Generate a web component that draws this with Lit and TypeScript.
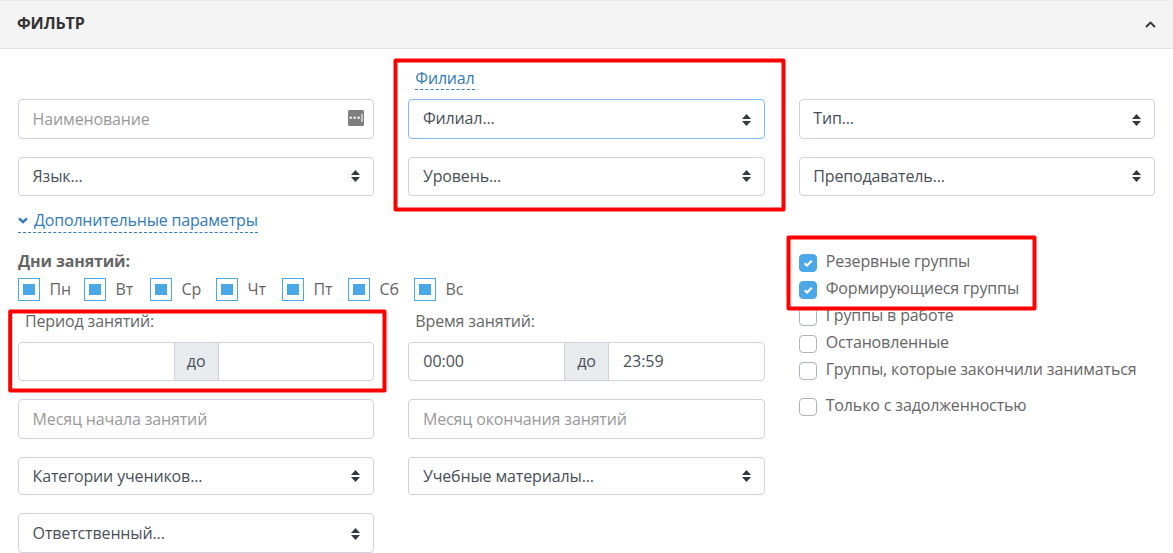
import { LitElement, html, svg, css, nothing } from "lit";
import { customElement, property } from "lit/decorators.js";

const FONT = css`"Open Sans", "Noto Sans", sans-serif`;

@customElement("filter-field")
class FilterField extends LitElement {
  @property() label = "";
  @property() kind = "select";
  static styles = css`
    :host { display: flex; box-sizing: border-box; align-items: center; justify-content: space-between;
      border: 1px solid #ced2da; border-radius: 4px; background: #fff;
      padding: 0 14px 0 13.6px; color: #495057; font: 16px/24px ${FONT}; white-space: nowrap; }
    :host([focused]) { border-color: #7fb9fb; }
    :host([raised]) .value { margin-top: -2px; }
    .hint { color: #999; }
    .sort { display: block; width: 9px; height: 12px; margin-right: -1px; }
    :host(.h40) .sort { margin-top: 1px; }
    :host(.h39) .sort { margin-top: -1px; }
    .key { display: block; width: 16px; height: 16px; margin: -2px -5px 0 0; }
  `;
  render() {
    return html`
      <span class=${this.kind === "select" ? "value" : "hint"}>${this.label}</span>
      ${this.kind === "select"
        ? html`<svg class="sort" viewBox="0 0 9 12"><path d="M4.500 0 9 5H0zM0 7h9l-4.500 5z" fill="#343a40"/></svg>`
        : this.kind === "key"
        ? html`<svg class="key" viewBox="0 0 16 16"><rect width="16" height="16" rx="1.500" fill="#7f7f7f"/>
            <circle cx="2.700" cy="7.700" r="1.300" fill="#eee"/><circle cx="6.700" cy="7.700" r="1.300" fill="#eee"/><circle cx="10.600" cy="7.700" r="1.300" fill="#eee"/>
            <path d="M13 4h2v8h-2z" fill="#c4c4c4"/></svg>`
        : nothing}`;
  }
}

@customElement("filter-range")
class FilterRange extends LitElement {
  @property() from = "";
  @property() to = "";
  static styles = css`
    :host { display: flex; box-sizing: border-box; border: 1px solid #ced2da; border-radius: 4px;
      overflow: hidden; color: #495057; font: 16px/37px ${FONT}; letter-spacing: -0.05px; }
    .end { flex: 1; padding-left: 14px; }
    .to { width: 43px; text-align: center; background: #e9ecef; border: solid #ced2da; border-width: 0 1px; }
  `;
  render() {
    return html`<div class="end">${this.from}</div><div class="to">до</div><div class="end">${this.to}</div>`;
  }
}

@customElement("filter-check")
class FilterCheck extends LitElement {
  @property({ type: Boolean }) checked = false;
  @property() label = "";
  static styles = css`
    :host { display: flex; height: 27px; gap: 9px; color: #666; font: 16px/24px ${FONT}; white-space: nowrap; }
    .box { box-sizing: border-box; width: 18px; height: 18px; margin-top: 5px; border: 1px solid #adb5bd; border-radius: 4px; background: #fff; }
    .on { border-color: #4aa8e8; background: #4aa8e8; }
    svg { display: block; width: 16px; height: 16px; }
  `;
  render() {
    return html`<div class="box ${this.checked ? "on" : ""}">${this.checked
      ? html`<svg viewBox="0 0 16 16"><path d="M4.600 8.300 7 10.500 11.800 5.700" fill="none" stroke="#fff" stroke-width="2.200"/></svg>` : nothing}</div>
      <span>${this.label}</span>`;
  }
}

@customElement("app-root")
class AppRoot extends LitElement {
  static styles = css`
    :host { display: block; position: relative; width: 1173px; height: 553px; overflow: hidden; background: #fff;
      color: #666; font: 16px/24px ${FONT}; letter-spacing: -0.14px; }
    header { box-sizing: border-box; height: 49px; display: flex; align-items: center; justify-content: space-between;
      padding: 0 17px; background: #f4f4f4; border-top: 1px solid #e9ecf1; border-bottom: 1px solid #e1e1e1; }
    h1 { margin: -4px 0 0; font-size: 16px; line-height: 24px; font-weight: 700; color: #333; }
    .chevron { width: 11px; height: 7px; }
    main { display: grid; grid-template-columns: repeat(3, 1fr); column-gap: 34px; padding: 0 18px; }
    .col { display: flex; flex-direction: column; min-width: 0; }
    .col > * { flex: none; }
    .top { height: 50px; box-sizing: border-box; padding: 17px 7px 0; }
    .link { display: inline-block; color: #337ab7; border-bottom: 1px dashed #337ab7; white-space: nowrap; letter-spacing: -0.18px; }
    .top .link { height: 23px; vertical-align: top; }
    .h38 { height: 38px; } .h39 { height: 39px; } .h40 { height: 40px; }
    .gap { margin-top: 18px; }
    .more { align-self: flex-start; margin-top: 12px; }
    .more svg { width: 10px; height: 7px; margin: 0 6px 2px 0; vertical-align: baseline; }
    .days-title { margin-top: 16px; font-weight: 700; }
    .days { display: flex; height: 24px; margin-top: 4px; }
    .day { display: flex; flex: none; width: 66px; gap: 9.6px; }
    .mark { box-sizing: border-box; width: 22px; height: 23px; margin-top: 1px; border: 1px solid #4aa8e8; display: grid; place-items: center; }
    .mark i { width: 12px; height: 11px; background: #4aa8e8; }
    .caption { height: 33px; padding-left: 7px; margin-top: 8px; box-sizing: border-box; }
    .caption.right { margin-top: 113px; }
    .checks { margin-top: 53px; }
    .last { margin-top: 9px; }
    .frames { position: absolute; left: 0; top: 0; width: 1173px; height: 553px; pointer-events: none; }
  `;
  render() {
    const frames = [[395.5, 60.5, 388, 149], [10.2, 311.5, 374.3, 79], [788.5, 237.5, 246, 71]];
    return html`
      <header><h1>ФИЛЬТР</h1>
        <svg class="chevron" viewBox="0 0 11 7"><path d="m1 6 4.500-4.500L10 6" fill="none" stroke="#333" stroke-width="1.900"/></svg>
      </header>
      <main>
        <div class="col">
          <div class="top"></div>
          <filter-field class="h40" kind="key" label="Наименование"></filter-field>
          <filter-field class="h39 gap" raised label="Язык..."></filter-field>
          <div class="link more"><svg viewBox="0 0 10 7"><path d="m1 1.300 4 3.800 4-3.800" fill="none" stroke="#337ab7" stroke-width="2.500"/></svg>Дополнительные параметры</div>
          <div class="days-title">Дни занятий:</div>
          <div class="days">${["Пн", "Вт", "Ср", "Чт", "Пт", "Сб", "Вс"].map((d) => html`<div class="day"><div class="mark"><i></i></div>${d}</div>`)}</div>
          <div class="caption">Период занятий:</div>
          <filter-range class="h39"></filter-range>
          <filter-field class="h40 gap" kind="text" label="Месяц начала занятий"></filter-field>
          <filter-field class="h38 gap" label="Категории учеников..."></filter-field>
          <filter-field class="h40 gap" label="Ответственный..."></filter-field>
        </div>
        <div class="col">
          <div class="top"><span class="link">Филиал</span></div>
          <filter-field class="h40" raised focused label="Филиал..."></filter-field>
          <filter-field class="h39 gap" raised label="Уровень..."></filter-field>
          <div class="caption right">Время занятий:</div>
          <filter-range class="h39" from="00:00" to="23:59"></filter-range>
          <filter-field class="h40 gap" kind="text" label="Месяц окончания занятий"></filter-field>
          <filter-field class="h38 gap" label="Учебные материалы..."></filter-field>
        </div>
        <div class="col">
          <div class="top"></div>
          <filter-field class="h40" raised label="Тип..."></filter-field>
          <filter-field class="h39 gap" raised label="Преподаватель..."></filter-field>
          <div class="checks">
            <filter-check checked label="Резервные группы"></filter-check>
            <filter-check checked label="Формирующиеся группы"></filter-check>
            <filter-check label="Группы в работе"></filter-check>
            <filter-check label="Остановленные"></filter-check>
            <filter-check label="Группы, которые закончили заниматься"></filter-check>
            <filter-check class="last" label="Только с задолженностью"></filter-check>
          </div>
        </div>
      </main>
      <svg class="frames">${frames.map(([x, y, w, h]) => svg`<rect x=${x} y=${y} width=${w} height=${h} fill="none" stroke="#f00" stroke-width="4" stroke-linejoin="round"/>`)}</svg>`;
  }
}
